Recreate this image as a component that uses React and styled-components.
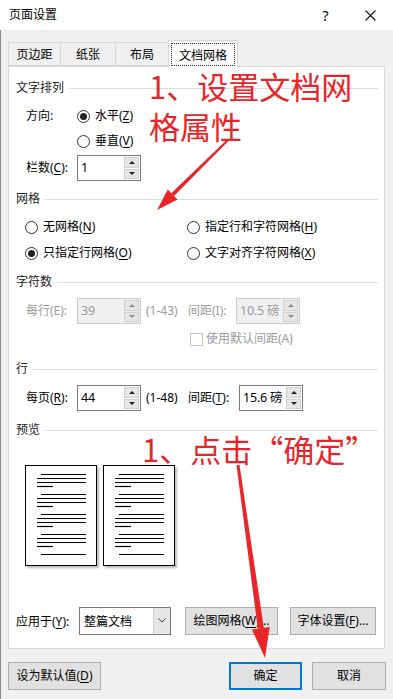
import React from 'react';
import styled, { createGlobalStyle } from 'styled-components';

const GlobalStyle = createGlobalStyle`
  html, body { margin: 0; padding: 0; }
  body {
    background: #f0f0f0;
    font-family: "Noto Sans", "Noto Sans CJK SC", sans-serif;
    font-size: 12px;
    color: #000;
  }
  * { box-sizing: border-box; }
`;

const Window = styled.div`
  position: relative;
  width: 393px;
  height: 699px;
  overflow: hidden;
  background: #f0f0f0;
  display: flex;
  flex-direction: column;
`;

const TitleBar = styled.div`
  height: 30px;
  flex-shrink: 0;
  background: #fff;
  display: flex;
  align-items: center;
  padding-left: 9px;
`;

const Title = styled.span`
  flex: 1;
  font-size: 12px;
  line-height: 1;
`;

const TitleButton = styled.span`
  width: 45px;
  height: 30px;
  display: flex;
  align-items: center;
  justify-content: center;
  font-family: "Noto Sans", sans-serif;
  font-size: 14px;
`;

const Body = styled.div`
  flex: 1;
  display: flex;
  flex-direction: column;
  border-left: 1px solid #8c8c8c;
  padding: 10px 8px 0 7px;
`;

const TabRow = styled.div`
  display: flex;
  align-items: flex-end;
  height: 26px;
  position: relative;
  z-index: 1;
`;

const Tab = styled.div`
  width: ${p => p.$w}px;
  height: ${p => (p.$active ? 27 : 24)}px;
  margin-left: -1px;
  margin-bottom: ${p => (p.$active ? -1 : 0)}px;
  background: ${p => (p.$active ? '#fff' : '#f0f0f0')};
  border: 1px solid #d9d9d9;
  border-bottom: ${p => (p.$active ? 'none' : '1px solid #d9d9d9')};
  display: flex;
  align-items: center;
  justify-content: center;
  padding: ${p => (p.$active ? '2px 2px 1px' : '0')};
  &:first-child { margin-left: 0; }
`;

const FocusLabel = styled.span`
  flex: 1;
  align-self: stretch;
  display: flex;
  align-items: center;
  justify-content: center;
  border: 1px dotted #333;
`;

const Panel = styled.div`
  height: 583px;
  background: #fff;
  border: 1px solid #d9d9d9;
  display: flex;
  flex-direction: column;
  padding: 0 6px 11px 7px;
`;

const SectionHead = styled.div`
  display: flex;
  align-items: center;
  gap: 5px;
  height: 16px;
  margin-top: ${p => p.$mt}px;
  color: #222;
  line-height: 16px;
`;

const Rule = styled.span`
  flex: 1;
  height: 1px;
  background: #dcdcdc;
`;

const Row = styled.div`
  display: flex;
  align-items: center;
  height: ${p => p.$h || 20}px;
  margin-top: ${p => p.$mt || 0}px;
  padding-left: ${p => p.$pl || 0}px;
  line-height: 16px;
`;

const Label = styled.span`
  width: ${p => (p.$w ? `${p.$w}px` : 'auto')};
  margin-left: ${p => p.$ml || 0}px;
  flex-shrink: 0;
  color: ${p => (p.$disabled ? '#9a9a9a' : '#000')};
  white-space: nowrap;
`;

const Acc = styled.u`
  text-decoration: underline;
  text-underline-offset: 2px;
  text-decoration-thickness: 1px;
`;

const RadioOption = styled.span`
  display: inline-flex;
  align-items: center;
  gap: 5px;
  white-space: nowrap;
`;

const RadioCircle = styled.span`
  width: 13px;
  height: 13px;
  border-radius: 50%;
  border: 1px solid #333;
  background: #fff;
  display: flex;
  align-items: center;
  justify-content: center;
  &::after {
    content: '';
    width: 7px;
    height: 7px;
    border-radius: 50%;
    background: #222;
    display: ${p => (p.$checked ? 'block' : 'none')};
  }
`;

const RadioGrid = styled.div`
  display: grid;
  grid-template-columns: 162px 1fr;
  grid-auto-rows: 20px;
  row-gap: 6px;
  align-items: center;
  margin-top: ${p => p.$mt}px;
  padding-left: 9px;
  line-height: 16px;
`;

const SpinBox = styled.div`
  width: ${p => p.$w}px;
  height: 26px;
  margin-left: ${p => p.$ml || 0}px;
  flex-shrink: 0;
  display: flex;
  border: 1px solid ${p => (p.$disabled ? '#cccccc' : '#7a7a7a')};
  background: ${p => (p.$disabled ? '#f0f0f0' : '#fff')};
`;

const SpinText = styled.span`
  flex: 1;
  min-width: 0;
  display: flex;
  align-items: center;
  padding-left: 3px;
  font-size: 12.5px;
  letter-spacing: -0.2px;
  color: ${p => (p.$disabled ? '#9a9a9a' : '#000')};
  white-space: nowrap;
`;

const Spinner = styled.span`
  width: 16px;
  flex-shrink: 0;
  display: flex;
  flex-direction: column;
  gap: 1px;
  padding: 1px 1px 1px 0;
`;

const SpinButton = styled.span`
  flex: 1;
  background: #e6e6e6;
  border: 1px solid #d0d0d0;
  display: flex;
  align-items: center;
  justify-content: center;
  &::after {
    content: '';
    width: 0;
    height: 0;
    border-left: 3px solid transparent;
    border-right: 3px solid transparent;
    ${p => (p.$down ? 'border-top' : 'border-bottom')}: 3px solid ${p => (p.$disabled ? '#8a8a8a' : '#222')};
  }
`;

const CheckBox = styled.span`
  width: 13px;
  height: 13px;
  border: 1px solid #c4c4c4;
  background: #fff;
  flex-shrink: 0;
`;

const PreviewRow = styled.div`
  display: flex;
  gap: 6px;
  margin-top: 27px;
  padding-left: 9px;
`;

const PageCard = styled.div`
  width: 72px;
  height: 101px;
  border: 1px solid #000;
  background: #fff;
  box-shadow: 2px 2px 2px rgba(0, 0, 0, 0.28);
  svg { display: block; }
`;

const ApplyRow = styled.div`
  display: flex;
  align-items: center;
  margin-top: 40px;
  height: 29px;
`;

const SelectBox = styled.div`
  width: 92px;
  height: 28px;
  display: flex;
  border: 1px solid #7a7a7a;
  background: #fff;
`;

const SelectText = styled.span`
  flex: 1;
  display: flex;
  align-items: center;
  padding-left: 4px;
`;

const DropButton = styled.span`
  width: 17px;
  background: #e5e5e5;
  border-left: 1px solid #cfcfcf;
  display: flex;
  align-items: center;
  justify-content: center;
`;

const Button = styled.div`
  width: ${p => p.$w}px;
  height: 28px;
  margin-left: ${p => p.$ml || 0}px;
  flex-shrink: 0;
  background: #e1e1e1;
  border: ${p => (p.$primary ? '2px solid #0078d7' : '1px solid #adadad')};
  display: flex;
  align-items: center;
  justify-content: center;
  white-space: nowrap;
  line-height: 16px;
`;

const Footer = styled.div`
  display: flex;
  align-items: center;
  margin-top: 13px;
  margin-right: -1px;
`;

const Spacer = styled.span`
  flex: 1;
`;

const Note = styled.div`
  position: absolute;
  left: ${p => p.$x}px;
  top: ${p => p.$y}px;
  color: #e8262a;
  font-family: "Noto Sans CJK SC", sans-serif;
  font-size: 31px;
  line-height: 40px;
  white-space: nowrap;
  pointer-events: none;
  z-index: 5;
`;

const ArrowLayer = styled.svg`
  position: absolute;
  left: 0;
  top: 0;
  pointer-events: none;
  z-index: 6;
`;

function Spin({ value, w, ml, disabled }) {
  return (
    <SpinBox $w={w} $ml={ml} $disabled={disabled}>
      <SpinText $disabled={disabled}>{value}</SpinText>
      <Spinner>
        <SpinButton $disabled={disabled} />
        <SpinButton $down $disabled={disabled} />
      </Spinner>
    </SpinBox>
  );
}

function Radio({ checked, children }) {
  return (
    <RadioOption>
      <RadioCircle $checked={checked} />
      <span>{children}</span>
    </RadioOption>
  );
}

function PagePreview() {
  const lines = [];
  for (let g = 0; g < 5; g++) {
    const y = 8.5 + g * 20;
    lines.push(<line key={`i${g}`} x1="15" x2="60" y1={y} y2={y} />);
    if (g < 4) {
      lines.push(<line key={`a${g}`} x1="11" x2="60" y1={y + 4} y2={y + 4} />);
      lines.push(<line key={`b${g}`} x1="11" x2="60" y1={y + 8} y2={y + 8} />);
      lines.push(<line key={`c${g}`} x1="11" x2="27" y1={y + 12} y2={y + 12} />);
    }
  }
  return (
    <PageCard>
      <svg width="70" height="99" viewBox="0 0 70 99">
        <g stroke="#000" strokeWidth="1.2">{lines}</g>
      </svg>
    </PageCard>
  );
}

export default function App() {
  return (
    <>
      <GlobalStyle />
      <Window>
        <TitleBar>
          <Title>页面设置</Title>
          <TitleButton>?</TitleButton>
          <TitleButton>
            <svg width="11" height="11" viewBox="0 0 11 11">
              <path d="M0.5 0.5 L10.5 10.5 M10.5 0.5 L0.5 10.5" stroke="#111" strokeWidth="1.1" />
            </svg>
          </TitleButton>
        </TitleBar>

        <Body>
          <TabRow>
            <Tab $w={53}>页边距</Tab>
            <Tab $w={56}>纸张</Tab>
            <Tab $w={54}>布局</Tab>
            <Tab $w={70} $active>
              <FocusLabel>文档网格</FocusLabel>
            </Tab>
          </TabRow>

          <Panel>
            <SectionHead $mt={13}>
              <span>文字排列</span>
              <Rule />
            </SectionHead>
            <Row $mt={10} $pl={10}>
              <Label $w={51}>方向:</Label>
              <Radio checked>
                水平(<Acc>Z</Acc>)
              </Radio>
            </Row>
            <Row $mt={5} $pl={61}>
              <Radio>
                垂直(<Acc>V</Acc>)
              </Radio>
            </Row>
            <Row $mt={4} $h={26} $pl={10}>
              <Label $w={51}>
                栏数(<Acc>C</Acc>):
              </Label>
              <Spin value="1" w={64} />
            </Row>

            <SectionHead $mt={10}>
              <span>网格</span>
              <Rule />
            </SectionHead>
            <RadioGrid $mt={10}>
              <Radio>
                无网格(<Acc>N</Acc>)
              </Radio>
              <Radio>
                指定行和字符网格(<Acc>H</Acc>)
              </Radio>
              <Radio checked>
                只指定行网格(<Acc>O</Acc>)
              </Radio>
              <Radio>
                文字对齐字符网格(<Acc>X</Acc>)
              </Radio>
            </RadioGrid>

            <SectionHead $mt={11}>
              <span>字符数</span>
              <Rule />
            </SectionHead>
            <Row $mt={8} $h={26} $pl={10}>
              <Label $w={51} $disabled>每行(E):</Label>
              <Spin value="39" w={64} disabled />
              <Label $w={42} $ml={5} $disabled>(1-43)</Label>
              <Label $w={48} $disabled>间距(I):</Label>
              <Spin value="10.5 磅" w={64} disabled />
            </Row>
            <Row $mt={7} $h={16} $pl={174}>
              <CheckBox />
              <Label $ml={3} $disabled>使用默认间距(A)</Label>
            </Row>

            <SectionHead $mt={14}>
              <span>行</span>
              <Rule />
            </SectionHead>
            <Row $mt={8} $h={26} $pl={10}>
              <Label $w={51}>
                每页(<Acc>R</Acc>):
              </Label>
              <Spin value="44" w={64} />
              <Label $w={42} $ml={5}>(1-48)</Label>
              <Label $w={51}>
                间距(<Acc>T</Acc>):
              </Label>
              <Spin value="15.6 磅" w={64} />
            </Row>

            <SectionHead $mt={11}>
              <span>预览</span>
              <Rule />
            </SectionHead>
            <PreviewRow>
              <PagePreview />
              <PagePreview />
            </PreviewRow>

            <ApplyRow>
              <Label $w={63}>
                应用于(<Acc>Y</Acc>):
              </Label>
              <SelectBox>
                <SelectText>整篇文档</SelectText>
                <DropButton>
                  <svg width="8" height="5" viewBox="0 0 8 5">
                    <path d="M0.5 0.5 L4 4 L7.5 0.5" fill="none" stroke="#444" strokeWidth="1" />
                  </svg>
                </DropButton>
              </SelectBox>
              <Button $w={93} $ml={14}>
                绘图网格(<Acc>W</Acc>)...
              </Button>
              <Button $w={86} $ml={12}>
                字体设置(<Acc>F</Acc>)...
              </Button>
            </ApplyRow>
          </Panel>

          <Footer>
            <Button $w={93}>
              设为默认值(<Acc>D</Acc>)
            </Button>
            <Spacer />
            <Button $w={73} $primary>确定</Button>
            <Button $w={74} $ml={10}>取消</Button>
          </Footer>
        </Body>

        <Note $x={149} $y={66}>
          1、设置文档网
          <br />
          格属性
        </Note>
        <Note $x={142} $y={429}>1、点击“确定”</Note>

        <ArrowLayer width="393" height="699" viewBox="0 0 393 699">
          <g fill="#e8262a">
            <polygon points="228.7,140.7 227.3,139.3 171.3,193.2 174.1,196.0" />
            <polygon points="177.6,199.6 167.8,189.6 157,210" />
            <polygon points="239.5,464.8 236.5,465.2 257.8,628.7 263.8,627.9" />
            <polygon points="269.7,627.1 251.9,629.5 265,658" />
          </g>
        </ArrowLayer>
      </Window>
    </>
  );
}
